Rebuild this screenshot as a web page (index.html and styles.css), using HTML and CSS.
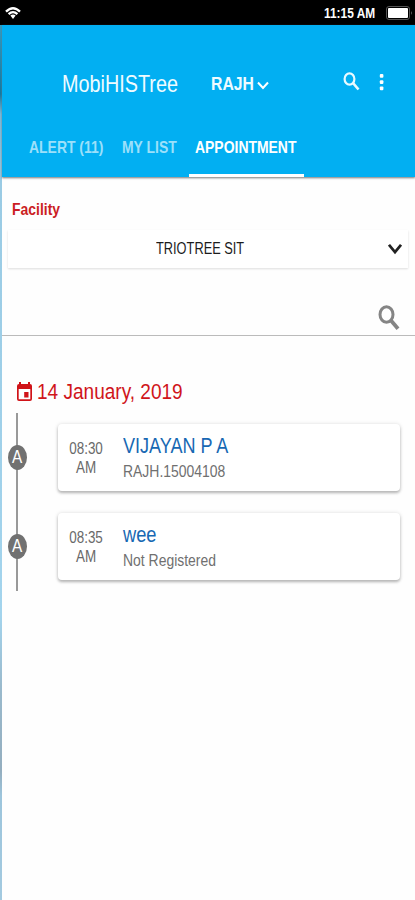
FILE: index.html
```html
<!DOCTYPE html>
<html lang="en">
<head>
<meta charset="utf-8">
<title>MobiHISTree</title>
<link rel="stylesheet" href="styles.css">
</head>
<body>
<div class="status">
  <svg class="wifi" width="16" height="14" viewBox="0 0 16 14" fill="none" stroke="#fff" stroke-width="2.3"><path d="M1 5.6Q8-1.2 15 5.6M3.6 8.2Q8 4 12.4 8.2"/><path d="M5.4 9.4Q8 7.4 10.6 9.4L8 13z" fill="#fff" stroke="none"/></svg>
  <span class="clock">11:15 AM</span>
  <svg class="battery" width="27" height="14" viewBox="0 0 27 14"><rect x=".5" y=".5" width="23" height="13" rx="2.5" fill="none" stroke="#555"/><rect x="2" y="2" width="20" height="10" rx="1" fill="#fff"/><path d="M25 5q1.5 2 0 4z" fill="#888"/></svg>
</div>
<div class="screen">
  <header class="header">
    <div class="bar">
      <h1 class="title">MobiHISTree</h1>
      <span class="site">RAJH</span>
      <svg class="caret" width="12" height="9" viewBox="0 0 12 9" fill="none" stroke="#fff" stroke-width="2"><path d="M1 1.5l5 5.5 5-5.5"/></svg>
      <svg class="find" width="17" height="19" viewBox="0 0 17 19" fill="none" stroke="#e9faff" stroke-width="2.2"><ellipse cx="6.5" cy="7" rx="4.9" ry="5.7"/><path d="M10 11l5.5 6.5" stroke-width="2.7"/></svg>
      <svg class="more" width="5" height="18" viewBox="0 0 5 18" fill="#fff"><rect x=".8" y="1" width="3.6" height="3.8" rx="1"/><rect x=".8" y="7.2" width="3.6" height="3.8" rx="1"/><rect x=".8" y="13.4" width="3.6" height="3.8" rx="1"/></svg>
    </div>
    <nav class="tabs">
      <a class="tab alert"><span>ALERT (11)</span></a>
      <a class="tab list"><span>MY LIST</span></a>
      <a class="tab active"><span>APPOINTMENT</span></a>
    </nav>
  </header>
  <main>
    <div class="label">Facility</div>
    <div class="select">
      <span class="choice">TRIOTREE SIT</span>
      <svg width="14" height="12" viewBox="0 0 14 12" fill="none" stroke="#222" stroke-width="2.7"><path d="M1 1.8l6 7.4 6-7.4"/></svg>
    </div>
    <div class="search">
      <svg width="22" height="26" viewBox="0 0 22 26" fill="none" stroke="#858585" stroke-width="3"><ellipse cx="8.5" cy="9.5" rx="6.5" ry="7.8"/><path d="M13 15.5l7 8.2" stroke-width="3.8"/></svg>
    </div>
    <div class="date">
      <svg width="15" height="20" viewBox="0 0 15 20"><path d="M2 2V0h2v2h7V0h2v2q2 0 2 2v13q0 2-2 2H2q-2 0-2-2V4q0-2 2-2zM1.7 7v10.2h11.6V7z" fill="#d01318" fill-rule="evenodd"/><rect x="7.2" y="10" width="4.3" height="5.5" fill="#d01318"/></svg>
      <span>14 January, 2019</span>
    </div>
    <section class="timeline">
      <div class="entry">
        <div class="node"><span>A</span></div>
        <article class="card">
          <div class="time"><span>08:30</span><span>AM</span></div>
          <div class="info"><span class="name vijayan">VIJAYAN P A</span><span class="detail">RAJH.15004108</span></div>
        </article>
      </div>
      <div class="entry">
        <div class="node"><span>A</span></div>
        <article class="card">
          <div class="time"><span>08:35</span><span>AM</span></div>
          <div class="info"><span class="name">wee</span><span class="detail">Not Registered</span></div>
        </article>
      </div>
    </section>
  </main>
</div>
</body>
</html>
```

FILE: styles.css
```css
* { box-sizing: border-box; }
body {
  margin: 0;
  width: 415px;
  height: 900px;
  overflow: hidden;
  font-family: "Liberation Sans", Arial, sans-serif;
  background: #fefefe;
}
svg { display: block; flex: none; }
span, h1 { white-space: nowrap; }
.status {
  display: flex;
  height: 25px;
  padding: 0 2px 0 5px;
  align-items: center;
  background: #000;
}
.clock {
  width: 52px;
  margin: 1px 10px 0 auto;
  font: bold 14px/20px "Liberation Sans", sans-serif;
  color: #fff;
  transform: scaleX(.85);
  transform-origin: left;
}
.screen {
  height: 875px;
  border-left: 2px solid;
  border-image: linear-gradient(#2a9fc9 0, #087aa8 70px, #78bde0 90px, #9acbe4 160px, #a3d4ed 590px, #9abacd 660px, #94aebf 745px, #9dc5dc 770px, #a3cae0 100%) 1;
}
.header {
  height: 152px;
  background: #02aff2;
  box-shadow: 0 1px 2px #777;
}
.bar {
  display: flex;
  align-items: center;
  height: 91px;
  padding: 27px 31px 0 60px;
  color: #effbff;
}
.title {
  width: 149px;
  margin: 0;
  font-size: 24px;
  font-weight: 400;
  line-height: 30px;
  transform: scaleX(.825);
  transform-origin: left;
}
.site {
  width: 46px;
  font-size: 19px;
  font-weight: 700;
  transform: scaleX(.83);
  transform-origin: left;
}
.caret { margin-top: 2px; }
.find { margin: -5px 19px 0 auto; }
.more { margin-top: -4px; }
.tabs {
  display: flex;
  height: 61px;
  padding-left: 20px;
}
.tab {
  padding: 20px 6px 0 7px;
  font-size: 17px;
  font-weight: 700;
  line-height: 23px;
  color: #9ce0fa;
}
.tab span {
  display: block;
  width: 0;
  transform: scaleX(.82);
  transform-origin: left;
}
.alert { width: 93px; }
.list { width: 74px; }
.active {
  width: 115px;
  padding-left: 6px;
  color: #fff;
  border-bottom: 3px solid #fff;
}
.label {
  width: 50px;
  margin: 21px 0 0 10px;
  font-size: 17px;
  font-weight: 700;
  line-height: 24px;
  color: #cb1d23;
  transform: scaleX(.82);
  transform-origin: left;
}
.select {
  display: flex;
  justify-content: space-between;
  align-items: center;
  height: 38px;
  margin: 8px 7px 0 6px;
  padding: 0 6px 0 148px;
  background: #fff;
  box-shadow: 0 1px 2px #ddd;
}
.choice {
  font-size: 16px;
  color: #1c1c1c;
  transform: scaleX(.8);
  transform-origin: left;
}
.search {
  display: flex;
  justify-content: flex-end;
  height: 68px;
  padding: 37px 15px 0 0;
  border-bottom: 1px solid #bbb;
}
.date {
  display: flex;
  align-items: center;
  height: 28px;
  margin: 42px 0 0 15px;
  gap: 5px;
  font-size: 22px;
  color: #d0151b;
}
.date span {
  transform: scaleX(.865);
  transform-origin: left;
}
.timeline {
  display: flex;
  flex-direction: column;
  gap: 22px;
  height: 178px;
  margin-top: 7px;
  padding: 11px 13px 0 6px;
  background: linear-gradient(#999, #999) 14px 0 / 2px 178px no-repeat;
}
.entry {
  display: flex;
  align-items: center;
  justify-content: space-between;
}
.node {
  display: flex;
  align-items: center;
  justify-content: center;
  width: 19px;
  height: 25px;
  border-radius: 50%;
  background: #717171;
  color: #fff;
  font-size: 18px;
}
.node span { transform: scaleX(.85); }
.card {
  display: flex;
  width: 342px;
  height: 67px;
  margin-right: 2px;
  padding: 10px 10px;
  border-radius: 4px;
  background: #fff;
  box-shadow: 0 2px 3px #b5b5b5, 0 0 4px #e3e3e3;
}
.time {
  display: flex;
  flex-direction: column;
  align-items: center;
  width: 36px;
  padding-top: 5px;
  font-size: 16px;
  line-height: 19px;
  color: #696969;
}
.time span { transform: scaleX(.84); }
.info {
  display: flex;
  flex-direction: column;
  margin-left: 19px;
}
.name {
  font-size: 22px;
  line-height: 24px;
  color: #1768b3;
  transform: scaleX(.83);
  transform-origin: left;
}
.vijayan { transform: scaleX(.82); }
.detail {
  margin-top: 3px;
  font-size: 17px;
  line-height: 22px;
  color: #707070;
  transform: scaleX(.82);
  transform-origin: left;
}
```
